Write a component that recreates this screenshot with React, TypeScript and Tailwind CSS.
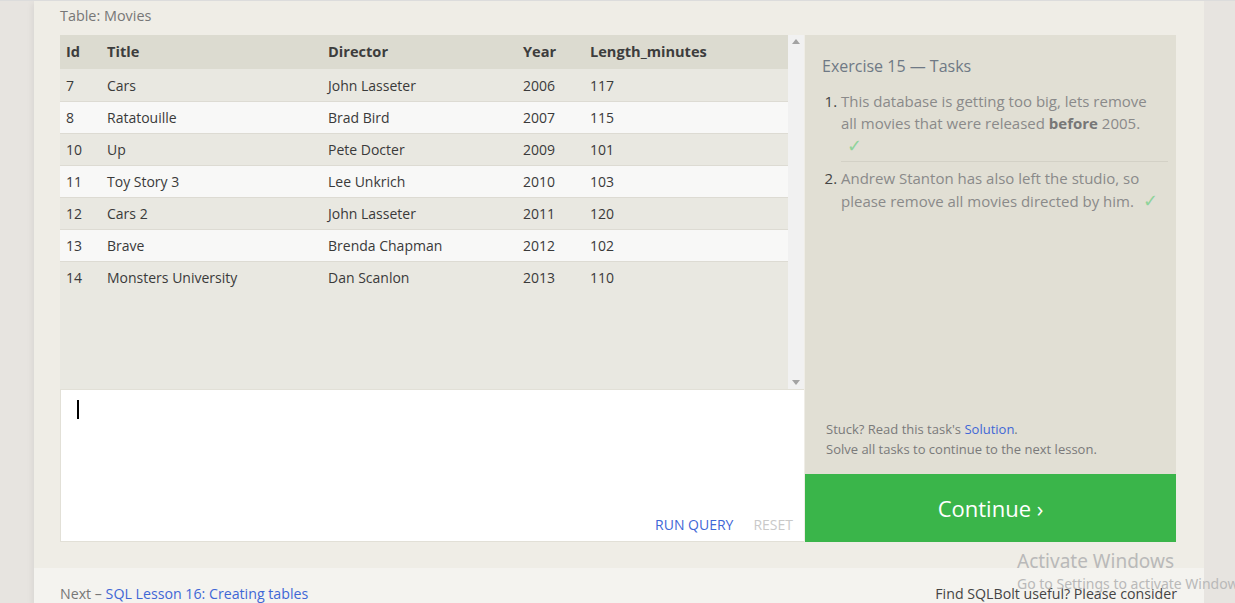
import React from "react";

const rows = [
  ["7", "Cars", "John Lasseter", "2006", "117"],
  ["8", "Ratatouille", "Brad Bird", "2007", "115"],
  ["10", "Up", "Pete Docter", "2009", "101"],
  ["11", "Toy Story 3", "Lee Unkrich", "2010", "103"],
  ["12", "Cars 2", "John Lasseter", "2011", "120"],
  ["13", "Brave", "Brenda Chapman", "2012", "102"],
  ["14", "Monsters University", "Dan Scanlon", "2013", "110"],
];

const colW = ["w-[41px]", "w-[221px]", "w-[195px]", "w-[67px]", "flex-1"];

export default function App() {
  return (
    <div
      className="relative h-[603px] overflow-hidden border-t border-[#dcdcdc] bg-[#e7e4e0] text-[#444]"
      style={{ fontFamily: '"Open Sans", "Noto Sans", sans-serif' }}
    >
      <div className="ml-[34px] flex w-[1170px] flex-col shadow-[-4px_0_6px_-2px_rgba(0,0,0,0.06)]">
        <div className="bg-[#efede6] pb-[26px] pl-[26px]">
          <div className="flex h-[34px] items-center pb-[5px] text-[14.4px] text-[#777]">Table: Movies</div>
          <div className="flex">
            {/* left */}
            <div className="flex w-[744px] flex-col">
              <div className="flex h-[354px] bg-[#e9e8e1]">
                <div className="flex flex-1 flex-col">
                  <div className="flex h-[34px] items-center bg-[#dcdbd0] text-[14.6px] font-bold text-[#3d3d3d]">
                    {["Id", "Title", "Director", "Year", "Length_minutes"].map((h, i) => (
                      <div key={h} className={`${colW[i]} pl-[6px]`}>
                        {h}
                      </div>
                    ))}
                  </div>
                  {rows.map((r, ri) => (
                    <div
                      key={ri}
                      className={`flex h-[32px] items-center text-[14px] text-[#3a3a3a] ${
                        ri > 0 ? "border-t border-[#dddbd3]" : ""
                      } ${ri % 2 === 1 ? "bg-[#f8f8f7]" : "bg-[#e9e8e1]"}`}
                    >
                      {r.map((c, i) => (
                        <div key={i} className={`${colW[i]} pl-[6px]`}>
                          {c}
                        </div>
                      ))}
                    </div>
                  ))}
                  <div className="flex-1" />
                </div>
                <div className="flex w-[16px] flex-col items-center justify-between bg-[#f1f1f1] py-[4px]">
                  <svg width="8" height="5" viewBox="0 0 8 5">
                    <path d="M0 5 L4 0 L8 5 Z" fill="#a3a3a3" />
                  </svg>
                  <svg width="8" height="5" viewBox="0 0 8 5">
                    <path d="M0 0 L4 5 L8 0 Z" fill="#a3a3a3" />
                  </svg>
                </div>
              </div>
              <div className="flex h-[153px] flex-col border-l border-b border-t border-[#e2e0d7] bg-white">
                <div className="flex-1 pl-[16px] pt-[10px]">
                  <div className="h-[19px] w-[2px] bg-black" />
                </div>
                <div className="flex justify-end gap-[20px] pb-[6px] pr-[11px] text-[14px]">
                  <span className="text-[#3f67d6]">RUN QUERY</span>
                  <span className="text-[#c9c9c9]">RESET</span>
                </div>
              </div>
            </div>
            {/* right */}
            <div className="ml-[1px] flex w-[371px] flex-col">
              <div className="flex flex-1 flex-col justify-between bg-[#e1dfd4] pb-[15px] pl-[17px] pr-[8px] pt-[19px]">
                <div>
                  <div className="text-[16px] leading-[24px] text-[#6f7985]">Exercise 15 — Tasks</div>
                  <ol className="mt-[12px] pl-[19px] text-[15px] leading-[22px] text-[#8a8a8a]">
                    <li className="list-decimal pb-[4px] pr-[8px] marker:text-[#444]">
                      This database is getting too big, lets remove all movies that were released{" "}
                      <b className="text-[#777]">before</b> 2005.{" "}
                      <span className="ml-[6px] text-[18px] leading-[22px] text-[#8fd39a]">✓</span>
                    </li>
                    <li className="list-decimal border-t border-[#d3d1c6] pt-[5px] pr-[8px] marker:text-[#444]">
                      Andrew Stanton has also left the studio, so please remove all movies directed by him.
                      <span className="ml-[9px] text-[18px] leading-[22px] text-[#8fd39a]">✓</span>
                    </li>
                  </ol>
                </div>
                <div className="pl-[4px] text-[13px] leading-[20px] text-[#7a7a7a]">
                  <div>
                    Stuck? Read this task's <span className="text-[#3f67d6]">Solution</span>.
                  </div>
                  <div>Solve all tasks to continue to the next lesson.</div>
                </div>
              </div>
              <div className="flex h-[68px] items-center justify-center bg-[#3ab54a] text-[22px] text-white">
                Continue ›
              </div>
            </div>
          </div>
        </div>
        <div className="h-[40px] bg-[#f4f3ef] pl-[26px] pr-[27px]">
          <div className="flex items-end justify-between pt-[16px] text-[14.2px] leading-[20px]">
            <div className="text-[#777]">
              Next – <span className="text-[#3f67d6]">SQL Lesson 16: Creating tables</span>
            </div>
            <div className="text-[14.2px] text-[#444]">Find SQLBolt useful? Please consider</div>
          </div>
        </div>
      </div>
      {/* Windows watermark */}
      <div
        className="pointer-events-none absolute left-[1017px] top-[547px] whitespace-nowrap text-[#b9b9b9]"
        style={{ fontFamily: '"Noto Sans", "Open Sans", sans-serif' }}
      >
        <div className="text-[19px] leading-[26px]">Activate Windows</div>
        <div className="text-[14px] leading-[19px]">Go to Settings to activate Windows.</div>
      </div>
    </div>
  );
}
